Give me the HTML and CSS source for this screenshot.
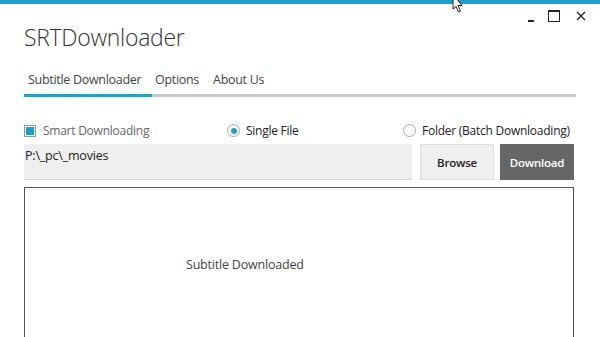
FILE: index.html
```html
<!DOCTYPE html>
<html lang="en">
<head>
    <meta charset="UTF-8">
    <title>SRTDownloader</title>
    <link rel="stylesheet" href="styles.css">
</head>
<body>
<div class="topbar">
    <svg class="cursor" width="12" height="14" viewBox="0 0 12 14">
        <path d="M1 -6 L1 9 L4 6.5 L6.5 12 L8.5 11 L6 5.5 L10 5.5 Z" fill="#fff" stroke="#222" stroke-width="1"/>
    </svg>
</div>
<div class="window">
    <div class="head">
        <h1 class="title">SRTDownloader</h1>
        <div class="controls">
            <span class="ctl min"></span>
            <span class="ctl max"></span>
            <span class="ctl close">
                <svg width="10" height="10" viewBox="0 0 10 10"><path d="M1 1 L9 9 M9 1 L1 9" stroke="#222" stroke-width="1.3"/></svg>
            </span>
        </div>
    </div>
    <ul class="tabs">
        <li class="current">Subtitle Downloader</li>
        <li>Options</li>
        <li>About Us</li>
    </ul>
    <div class="opts">
        <label class="opt"><span class="check"></span>Smart Downloading</label>
        <label class="opt dark"><span class="radio on"></span>Single File</label>
        <label class="opt dark"><span class="radio"></span>Folder (Batch Downloading)</label>
    </div>
    <div class="pathrow">
        <div class="path">P:\_pc\_movies</div>
        <button class="btn">Browse</button>
        <button class="btn dl">Download</button>
    </div>
    <div class="output">
        <p>Subtitle Downloaded</p>
    </div>
</div>
</body>
</html>
```

FILE: styles.css
```css
* {
    padding: 0;
    margin: 0;
    list-style: none;
    box-sizing: border-box;
}

body {
    background: #fff;
    font-family: "Open Sans", "Noto Sans", sans-serif;
    color: #333;
    overflow: hidden;
}

.topbar {
    height: 4px;
    background: #1a9fd0;
    position: relative;
}

.cursor {
    position: absolute;
    left: 452px;
    top: 0;
}

.window {
    padding: 0 24px;
}

.head {
    display: flex;
    justify-content: space-between;
    align-items: flex-start;
    height: 53px;
}

.title {
    font-weight: 300;
    font-size: 23px;
    color: #333;
    margin-top: 17px;
    letter-spacing: -0.3px;
}

.controls {
    display: flex;
    align-items: center;
    margin-top: 6px;
    margin-right: -11px;
}

.ctl {
    width: 12px;
    height: 12px;
    display: flex;
    align-items: center;
    justify-content: center;
}

.min {
    margin-right: 11px;
}

.min::after {
    content: '';
    width: 6px;
    height: 2px;
    background: #222;
    margin-top: 9px;
}

.max {
    margin-right: 15px;
}

.max::after {
    content: '';
    width: 10px;
    height: 9px;
    border: 1px solid #222;
    border-top-width: 2px;
}

.tabs {
    display: flex;
    border-bottom: 3px solid #c9c9c9;
    font-size: 12.5px;
    color: #444;
    height: 40px;
    align-items: flex-end;
    letter-spacing: -0.3px;
}

.tabs li {
    white-space: nowrap;
    padding: 0 11px 6px 3px;
    margin-bottom: -3px;
    border-bottom: 3px solid transparent;
}

.tabs li.current {
    padding: 0 0 6px 4px;
    width: 128px;
    border-bottom-color: #2b9dc3;
}

.opts {
    display: grid;
    grid-template-columns: 203px 176px auto;
    margin-top: 25px;
    font-size: 12px;
    height: 14px;
    align-items: center;
    letter-spacing: -0.25px;
}

.opt {
    display: flex;
    align-items: center;
    color: #666;
}

.opt.dark {
    color: #222;
}

.check {
    width: 12px;
    height: 12px;
    border: 1px solid #8a9ba3;
    background: #1a9fc8;
    margin-right: 7px;
    box-shadow: inset 0 0 0 1px #fff;
}

.radio {
    width: 13px;
    height: 13px;
    border-radius: 50%;
    border: 1px solid #aaa;
    margin-right: 6px;
    position: relative;
}

.radio.on::after {
    content: '';
    position: absolute;
    left: 2.5px;
    top: 2.5px;
    width: 6px;
    height: 6px;
    border-radius: 50%;
    background: #2a9fbf;
}

.pathrow {
    display: flex;
    margin-top: 8px;
    height: 36px;
}

.path {
    width: 388px;
    background: #efefef;
    border-bottom: 1px solid #d4d4d4;
    font-size: 12.5px;
    color: #222;
    padding: 3px 0 0 1px;
    letter-spacing: -0.2px;
}

.btn {
    width: 74px;
    border: 1px solid #dcdcdc;
    background: #efefef;
    font-family: "Open Sans", "Noto Sans", sans-serif;
    font-weight: 600;
    font-size: 11.5px;
    color: #222;
    margin-left: 8px;
    letter-spacing: -0.2px;
}

.btn.dl {
    margin-left: 6px;
    background: #666;
    border-color: #666;
    color: #fff;
}

.output {
    width: 550px;
    height: 160px;
    margin-top: 7px;
    border: 1px solid #555;
    padding: 68px 0 0 161px;
}

.output p {
    font-size: 12.5px;
    color: #444;
    line-height: 18px;
    letter-spacing: -0.2px;
}
```
